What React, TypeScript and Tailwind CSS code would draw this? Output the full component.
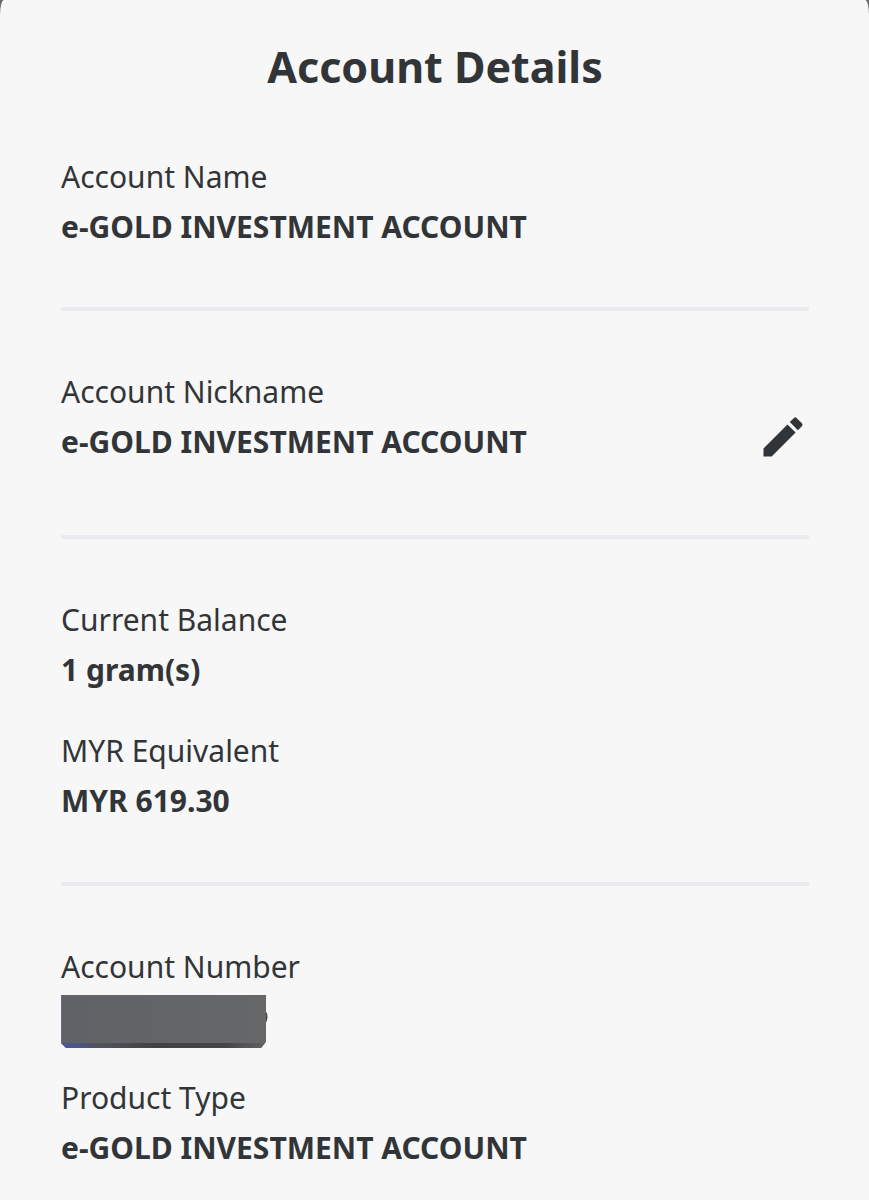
import type { ReactNode } from "react";

interface FieldProps {
	label: string;
	children: ReactNode;
}

function Field({ label, children }: FieldProps) {
	return (
		<div>
			<dt className="text-[30px] leading-[50px]">{label}</dt>
			<dd className="text-[30px] leading-[50px] font-bold">{children}</dd>
		</div>
	);
}

function Divider() {
	return <hr className="border-t-4 border-[#ebecf0]" />;
}

// Covers the account number
function HiddenNumber() {
	return (
		<svg
			viewBox="0 0 207 54"
			className="mt-[3px] h-[54px] w-[207px]"
			role="img"
			aria-label="Hidden account number">
			<defs>
				<linearGradient id="bar-edge">
					<stop offset="0" stopColor="#4a55a0" />
					<stop offset="0.2" stopColor="#525359" />
					<stop offset="0.45" stopColor="#424145" />
					<stop offset="0.8" stopColor="#454448" />
					<stop offset="1" stopColor="#626265" />
				</linearGradient>
				<linearGradient id="bar-face">
					<stop offset="0" stopColor="#606268" />
					<stop offset="0.3" stopColor="#626366" />
					<stop offset="1" stopColor="#666769" />
				</linearGradient>
			</defs>
			<path d="M204 15q5 7 0 14z" fill="#3d3d40" />
			<path d="M0 0h205v47l-5 6H5l-5-5z" fill="url(#bar-face)" />
			<path d="M0 48h204l-4 5H5z" fill="url(#bar-edge)" />
			<path d="M0 0v48" stroke="#747a9c" />
		</svg>
	);
}

export default function App() {
	return (
		<div className="min-h-screen bg-[#6b6b6b]">
			<main className="min-h-screen rounded-t-[4px_15px] bg-[#f7f7f7] pt-9 pr-[60px] pb-6 pl-[61px] font-['Noto_Sans',sans-serif] text-[#323538]">
				<h1 className="text-center text-[43px] leading-[62px] font-bold">
					Account Details
				</h1>

				<dl className="pt-[54px] pb-[55px]">
					<Field label="Account Name">e-GOLD INVESTMENT ACCOUNT</Field>
				</dl>
				<Divider />

				<div className="flex items-end justify-between pt-14 pb-[68px]">
					<dl>
						<Field label="Account Nickname">e-GOLD INVESTMENT ACCOUNT</Field>
					</dl>
					<button type="button" aria-label="Edit nickname" className="mb-1">
						<svg viewBox="0 0 24 24" className="size-[52px]" fill="currentColor">
							<path d="M3 17.25V21h3.75L17.81 9.94l-3.75-3.75L3 17.25zM20.71 7.04a.996.996 0 0 0 0-1.41l-2.34-2.34a.996.996 0 0 0-1.41 0l-1.83 1.83 3.75 3.75 1.83-1.83z" />
						</svg>
					</button>
				</div>
				<Divider />

				<dl className="flex flex-col gap-[31px] py-14">
					<Field label="Current Balance">1 gram(s)</Field>
					<Field label="MYR Equivalent">MYR 619.30</Field>
				</dl>
				<Divider />

				<dl className="flex flex-col gap-6 pt-14">
					<Field label="Account Number">
						<HiddenNumber />
					</Field>
					<Field label="Product Type">e-GOLD INVESTMENT ACCOUNT</Field>
				</dl>
			</main>
		</div>
	);
}
